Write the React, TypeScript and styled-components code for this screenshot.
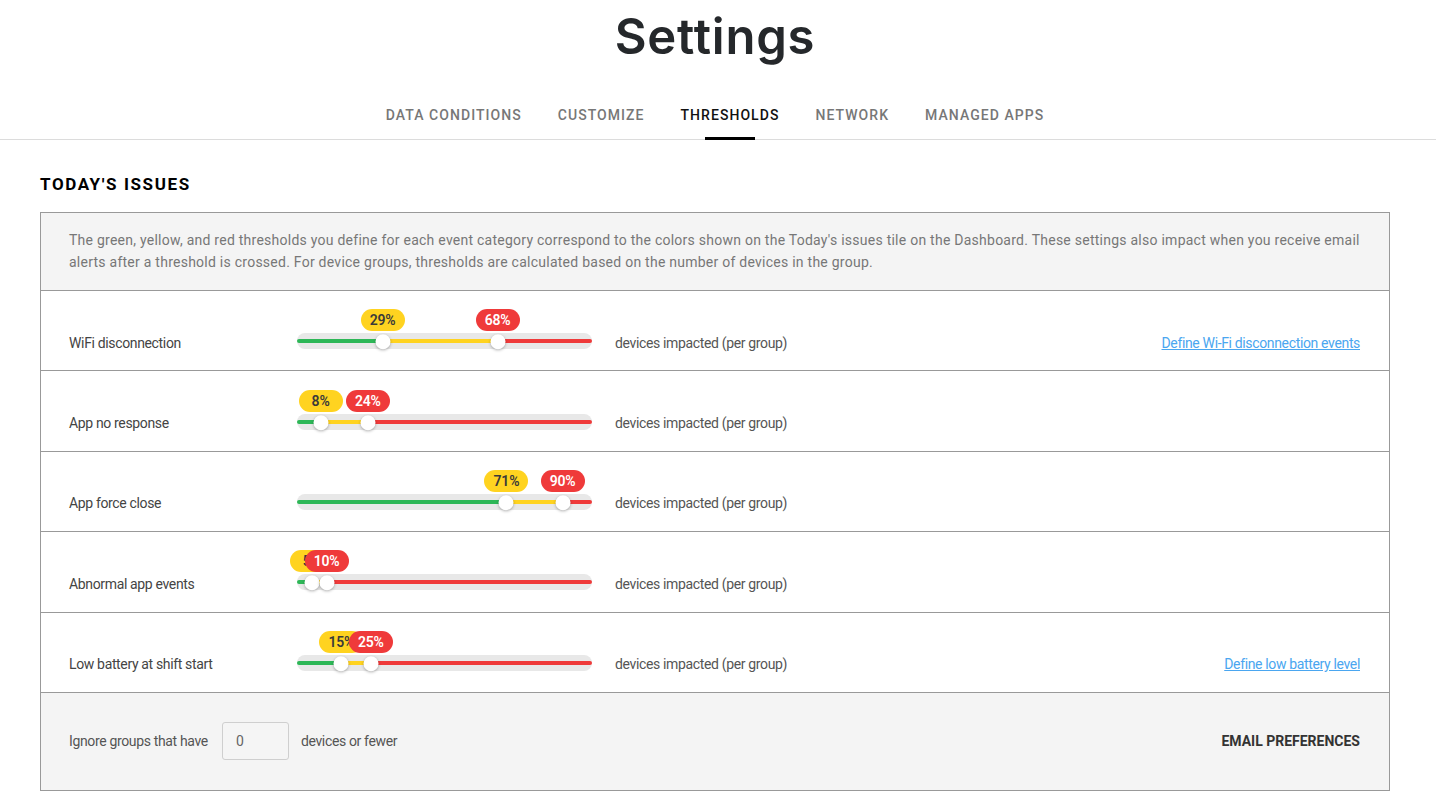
import React from "react";
import styled, { createGlobalStyle } from "styled-components";

const GlobalStyle = createGlobalStyle`
  html, body { margin: 0; padding: 0; background: #fff; }
  body { font-family: Roboto, "Liberation Sans", Arial, sans-serif; color: #333; }
  * { box-sizing: border-box; }
`;

const Page = styled.div`
  width: 100%;
`;

const Header = styled.header`
  display: flex;
  flex-direction: column;
  align-items: center;
  padding-right: 6px;
  border-bottom: 1px solid #dcdcdc;
`;

const Title = styled.h1`
  margin: 0;
  padding-top: 4px;
  font-family: Inter, "Noto Sans", sans-serif;
  font-weight: 600;
  font-size: 49px;
  line-height: 66px;
  letter-spacing: 0.8px;
  color: #25282b;
`;

const Tabs = styled.nav`
  display: flex;
  gap: 36px;
  margin-top: 35px;
`;

const Tab = styled.div<{ $active?: boolean }>`
  position: relative;
  font-family: Roboto, "Liberation Sans", sans-serif;
  font-size: 14px;
  font-weight: 500;
  letter-spacing: 1.05px;
  color: ${(p) => (p.$active ? "#111" : "#777")};
  padding-bottom: 14px;
  line-height: 20px;
  &::after {
    content: "";
    display: ${(p) => (p.$active ? "block" : "none")};
    position: absolute;
    left: 50%;
    bottom: -1px;
    width: 50px;
    height: 3px;
    transform: translateX(-50%);
    background: #000;
  }
`;

const Main = styled.main`
  padding: 33px 46px 0 40px;
`;

const SectionTitle = styled.h2`
  margin: 0 0 17px;
  font-family: Roboto, "Liberation Sans", sans-serif;
  font-size: 17px;
  font-weight: 700;
  letter-spacing: 1.6px;
  line-height: 22px;
  color: #000;
`;

const Card = styled.section`
  border: 1px solid #999;
  font-size: 14px;
  letter-spacing: -0.35px;
`;

const Description = styled.p`
  margin: 0;
  background: #f4f4f4;
  padding: 16px 29px 17px 28px;
  line-height: 22px;
  letter-spacing: 0.25px;
  color: #777;
`;

const Row = styled.div`
  display: flex;
  align-items: center;
  min-height: 80.4px;
  padding: 21px 29px 0 28px;
  border-top: 1px solid #999;
`;

const RowText = styled.div`
  padding-top: 3px;
  line-height: 18px;
`;

const Label = styled(RowText)`
  width: 228px;
  color: #444;
`;

const Unit = styled(RowText)`
  margin-left: 23px;
  color: #555;
`;

const Link = styled.a`
  margin-left: auto;
  padding-top: 3px;
  line-height: 18px;
  color: #4aa6f0;
  text-decoration: underline;
  cursor: pointer;
`;

const Track = styled.div`
  position: relative;
  width: 295px;
  height: 16px;
  border-radius: 8px;
  background: #e8e8e8;
  flex-shrink: 0;
`;

const Segment = styled.div<{ $color: string }>`
  position: absolute;
  top: 6px;
  height: 4px;
  background: ${(p) => p.$color};
  &:first-child { border-radius: 2px 0 0 2px; }
  &:nth-child(3) { border-radius: 0 2px 2px 0; }
`;

const Thumb = styled.div`
  position: absolute;
  top: 50%;
  width: 15px;
  height: 15px;
  border-radius: 50%;
  background: #fff;
  box-shadow: 0 1px 3px rgba(0, 0, 0, 0.3);
  transform: translate(-50%, -45%);
`;

const Badge = styled.div<{ $tone: "yellow" | "red" }>`
  position: absolute;
  bottom: calc(100% + 2px);
  min-width: 44px;
  height: 22px;
  padding: 0 6px;
  border-radius: 11px;
  transform: translateX(-50%);
  display: flex;
  align-items: center;
  justify-content: center;
  font-size: 14px;
  font-weight: 600;
  letter-spacing: -0.2px;
  background: ${(p) => (p.$tone === "yellow" ? "#ffd320" : "#ef3a3a")};
  color: ${(p) => (p.$tone === "yellow" ? "#3a3a3a" : "#fff")};
`;

const Footer = styled.div`
  display: flex;
  align-items: center;
  min-height: 98px;
  padding: 0 29px 0 28px;
  border-top: 1px solid #999;
  background: #f4f4f4;
  color: #555;
`;

const NumberInput = styled.input`
  width: 67px;
  height: 38px;
  margin: 0 12px 0 14px;
  padding: 0 13px;
  border: 1px solid #cfcfcf;
  border-radius: 3px;
  background: #f5f5f5;
  font-family: Roboto, "Liberation Sans", sans-serif;
  font-size: 14px;
  color: #666;
`;

const EmailButton = styled.div`
  margin-left: auto;
  font-weight: 700;
  color: #333;
  letter-spacing: 0;
`;

type Threshold = { label: string; low: number; high: number; link?: string };

const rows: Threshold[] = [
  { label: "WiFi disconnection", low: 29, high: 68, link: "Define Wi-Fi disconnection events" },
  { label: "App no response", low: 8, high: 24 },
  { label: "App force close", low: 71, high: 90 },
  { label: "Abnormal app events", low: 5, high: 10 },
  { label: "Low battery at shift start", low: 15, high: 25, link: "Define low battery level" },
];

function Slider({ low, high }: { low: number; high: number }) {
  return (
    <Track>
      <Segment $color="#2db757" style={{ left: 0, width: `${low}%` }} />
      <Segment $color="#ffd320" style={{ left: `${low}%`, width: `${high - low}%` }} />
      <Segment $color="#ef3a3a" style={{ left: `${high}%`, right: 0 }} />
      <Badge $tone="yellow" style={{ left: `${low}%` }}>{low}%</Badge>
      <Badge $tone="red" style={{ left: `${high}%` }}>{high}%</Badge>
      <Thumb style={{ left: `${low}%` }} />
      <Thumb style={{ left: `${high}%` }} />
    </Track>
  );
}

export default function App() {
  const tabs = ["DATA CONDITIONS", "CUSTOMIZE", "THRESHOLDS", "NETWORK", "MANAGED APPS"];
  return (
    <Page>
      <GlobalStyle />
      <Header>
        <Title>Settings</Title>
        <Tabs>
          {tabs.map((t) => (
            <Tab key={t} $active={t === "THRESHOLDS"}>{t}</Tab>
          ))}
        </Tabs>
      </Header>
      <Main>
        <SectionTitle>TODAY'S ISSUES</SectionTitle>
        <Card>
          <Description>
            The green, yellow, and red thresholds you define for each event category correspond to the colors shown on
            the Today's issues tile on the Dashboard. These settings also impact when you receive email alerts after a
            threshold is crossed. For device groups, thresholds are calculated based on the number of devices in the group.
          </Description>
          {rows.map((r) => (
            <Row key={r.label}>
              <Label>{r.label}</Label>
              <Slider low={r.low} high={r.high} />
              <Unit>devices impacted (per group)</Unit>
              {r.link && <Link>{r.link}</Link>}
            </Row>
          ))}
          <Footer>
            Ignore groups that have
            <NumberInput defaultValue="0" />
            devices or fewer
            <EmailButton>EMAIL PREFERENCES</EmailButton>
          </Footer>
        </Card>
      </Main>
    </Page>
  );
}
